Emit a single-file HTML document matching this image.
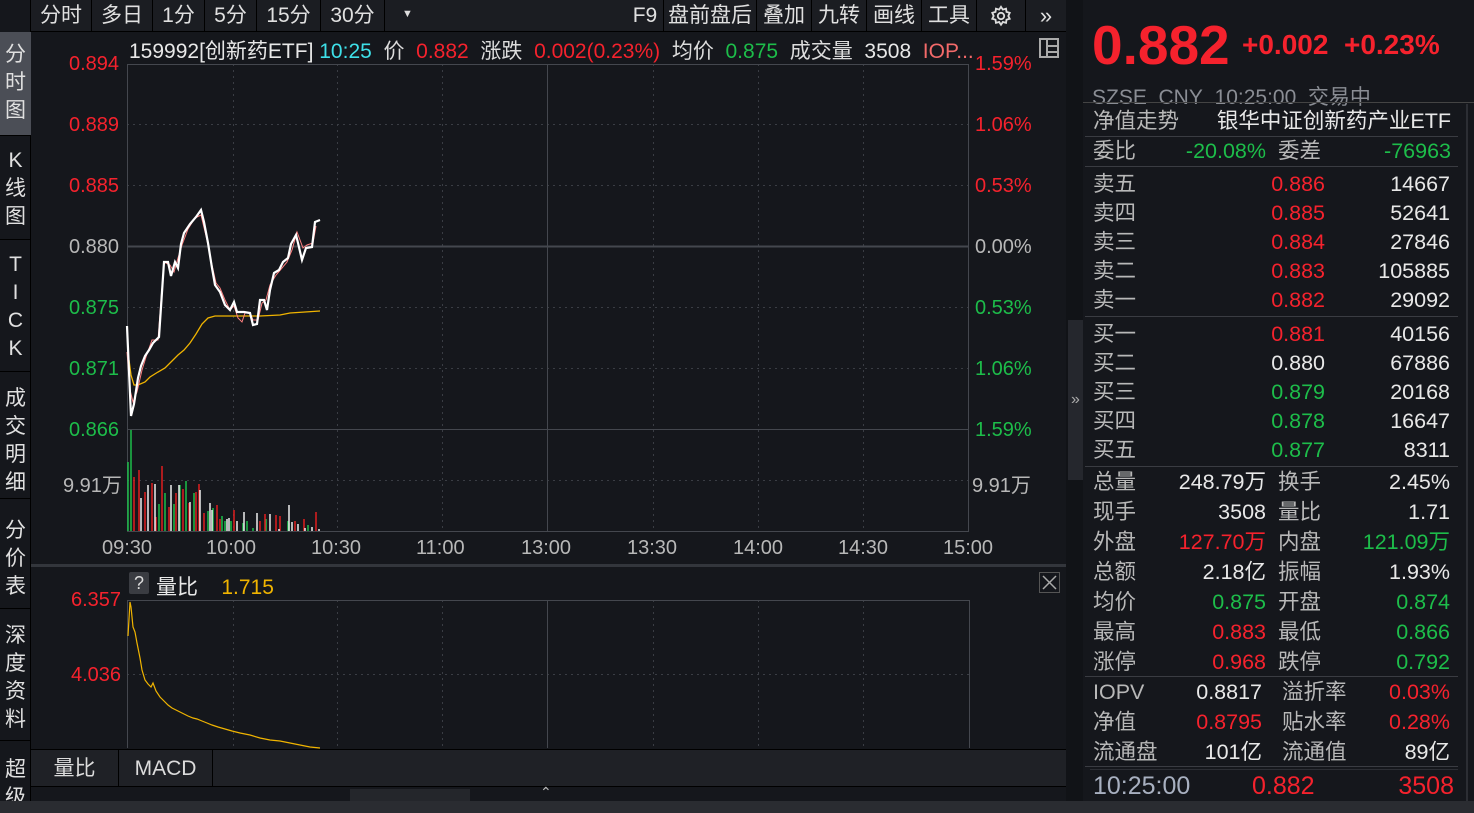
<!DOCTYPE html>
<html><head><meta charset="utf-8"><style>
*{margin:0;padding:0;box-sizing:border-box}
body{width:1474px;height:813px;background:#15171c;position:relative;overflow:hidden;font-family:"Liberation Sans","Noto Sans CJK SC",sans-serif;color:#dcdcdc}
.a{position:absolute;white-space:nowrap}
.r{color:#f5222d}.g{color:#1dbd4a}.w{color:#e8e8e8}.gr{color:#b8b8b8}.y{color:#f0b400}.c{color:#3ee0e8}
.tb{position:absolute;top:0;height:32px;font-size:21px;line-height:32px;text-align:center;border-right:1px solid #000;color:#e0e0e0}
.side{position:absolute;left:0;width:31px;font-size:21px;line-height:28px;text-align:center;color:#e0e0e0;border-bottom:1px solid #000}
.rl{position:absolute;font-size:21.5px;line-height:29px}
</style></head><body>
<div class="a" style="left:0;top:0;width:1066px;height:32px;background:#1b1d22;border-bottom:1px solid #000"></div>
<div class="tb" style="left:31px;width:61px">分时</div>
<div class="tb" style="left:92px;width:61px">多日</div>
<div class="tb" style="left:153px;width:52px">1分</div>
<div class="tb" style="left:205px;width:52px">5分</div>
<div class="tb" style="left:257px;width:64px">15分</div>
<div class="tb" style="left:321px;width:64px">30分</div>
<div class="a" style="left:402px;top:8px;font-size:11px;color:#ddd">▼</div>
<div class="tb" style="left:627px;width:37px">F9</div>
<div class="tb" style="left:664px;width:93px">盘前盘后</div>
<div class="tb" style="left:757px;width:55px">叠加</div>
<div class="tb" style="left:812px;width:55px">九转</div>
<div class="tb" style="left:867px;width:55px">画线</div>
<div class="tb" style="left:922px;width:55px">工具</div>
<div class="tb" style="left:977px;width:49px"><svg width="22" height="22" viewBox="0 0 24 24" style="margin-top:5px" fill="none" stroke="#ddd" stroke-width="2"><circle cx="12" cy="12" r="3.5"/><path d="M12 2l2 3 3.5-1 .5 3.5 3.5 1-1.5 3.5 1.5 3-3.5 1-.5 3.5-3.5-1-2 3-2-3-3.5 1-.5-3.5-3.5-1 1.5-3-1.5-3.5 3.5-1 .5-3.5 3.5 1z"/></svg></div>
<div class="tb" style="left:1026px;width:40px;border:none;font-size:22px">»</div>
<div class="a" style="left:0;top:0;width:31px;height:813px;background:#15171c;border-right:1px solid #000"></div>
<div class="side" style="top:32px;height:104px;background:#4b4e56;padding-top:9px">分<br>时<br>图</div>
<div class="side" style="top:136px;height:104px;padding-top:11px">K<br>线<br>图</div>
<div class="side" style="top:240px;height:132px;padding-top:11px">T<br>I<br>C<br>K</div>
<div class="side" style="top:372px;height:127px;padding-top:13px">成<br>交<br>明<br>细</div>
<div class="side" style="top:499px;height:110px;padding-top:18px">分<br>价<br>表</div>
<div class="side" style="top:609px;height:132px;padding-top:13px">深<br>度<br>资<br>料</div>
<div class="side" style="top:741px;height:72px;padding-top:15px;border:none">超<br>级</div>
<div class="a" style="left:129px;top:35px;font-size:21px"><span class="w">159992[创新药ETF]</span> <span class="c">10:25</span>&nbsp; 价&nbsp; <span class="r">0.882</span>&nbsp; 涨跌&nbsp; <span class="r">0.002(0.23%)</span>&nbsp; 均价&nbsp; <span class="g">0.875</span>&nbsp; 成交量&nbsp; <span class="w">3508</span>&nbsp; <span style="color:#f36a6a">IOP...</span></div>
<svg class="a" style="left:1038px;top:37px" width="22" height="22" viewBox="0 0 22 22" fill="none" stroke="#aaa" stroke-width="2"><rect x="2" y="2" width="18" height="18"/><path d="M9 2v18M9 9h11M9 15h11"/></svg>
<svg class="a" style="left:0;top:0" width="1066" height="813">
<g stroke="#3a3d44" stroke-width="1" stroke-dasharray="2,4">
<line x1="127" y1="124.5" x2="969" y2="124.5"/><line x1="127" y1="185.5" x2="969" y2="185.5"/><line x1="127" y1="307.5" x2="969" y2="307.5"/><line x1="127" y1="368.5" x2="969" y2="368.5"/><line x1="127" y1="480.5" x2="969" y2="480.5"/>
<line x1="233.5" y1="64" x2="233.5" y2="531"/><line x1="337.5" y1="64" x2="337.5" y2="531"/><line x1="442.5" y1="64" x2="442.5" y2="531"/><line x1="653.5" y1="64" x2="653.5" y2="531"/><line x1="758.5" y1="64" x2="758.5" y2="531"/><line x1="863.5" y1="64" x2="863.5" y2="531"/>
<line x1="127" y1="674.5" x2="969" y2="674.5"/>
<line x1="233.5" y1="600" x2="233.5" y2="748"/><line x1="337.5" y1="600" x2="337.5" y2="748"/><line x1="442.5" y1="600" x2="442.5" y2="748"/><line x1="653.5" y1="600" x2="653.5" y2="748"/><line x1="758.5" y1="600" x2="758.5" y2="748"/><line x1="863.5" y1="600" x2="863.5" y2="748"/>
</g>
<g stroke="#44474e" stroke-width="1" fill="none">
<rect x="127.5" y="64.5" width="841" height="467"/>
<line x1="127" y1="246.5" x2="969" y2="246.5" stroke-width="2"/>
<line x1="127" y1="429.5" x2="969" y2="429.5"/>
<line x1="547.5" y1="64" x2="547.5" y2="531"/>
<path d="M127.5 748V600.5H969.5V748"/>
<line x1="547.5" y1="600" x2="547.5" y2="748"/>
</g>
<line x1="31" y1="565.5" x2="1066" y2="565.5" stroke="#33363c" stroke-width="3"/>
<g stroke-width="1.5">
<path stroke="#1dbd4a" d="M128 531V462M131 531V430M159 531V504M165 531V493M174 531V504M180 531V485M186 531V481M194 531V493M208 531V511M213 531V508M222 531V516M225 531V521M231 531V521M243 531V523M247 531V521M253 531V528M266 531V519M288 531V521M289 531V523M308 531V525"/>
<path stroke="#e01f1f" d="M134 531V477M139 531V470M145 531V492M152 531V483M156 531V517M162 531V466M169 531V507M176 531V493M183 531V489M189 531V503M196 531V492M199 531V484M204 531V513M217 531V505M220 531V519M234 531V510M260 531V521M265 531V514M276 531V515M280 531V516M295 531V521M304 531V519M316 531V512"/>
<path stroke="#ededed" d="M141 531V498M148 531V485M155 531V484M171 531V485M179 531V485M190 531V502M200 531V490M210 531V503M212 531V510M227 531V519M229 531V518M237 531V521M244 531V512M257 531V513M270 531V514M279 531V529M289 531V505M292 531V522M298 531V524M305 531V528M312 531V527M319 531V529"/>
</g>
<polyline fill="none" stroke="#f0b400" stroke-width="1.3" points="129,360 131,375 134,385 138,385 145,382 150,377 158,372 165,368 172,361 178,355 184,350 190,343 196,334 202,324 208,318 215,316 230,316 245,316 260,316 280,315 290,313 305,312 320,311"/>
<polyline fill="none" stroke="#ff8080" stroke-width="1" points="127,352 130,390 133,402 137,392 142,370 146,357 152,340 158,340 161,300 164,262 170,265 174,272 178,258 182,245 188,229 195,218 201,215 207,240 212,265 216,283 220,288 225,300 230,310 234,306 238,318 242,322 245,313 250,313 253,320 258,320 262,303 266,300 270,285 276,275 282,268 287,262 292,250 297,232 300,240 303,248 307,245 313,243 316,226"/>
<polyline fill="none" stroke="#ffffff" stroke-width="2.2" points="127,326 131,416 134,404 138,378 141,366 145,356 149,350 153,343 156,340 159,337 162,292 164,262 168,262 171,276 175,262 178,268 181,244 184,233 190,224 196,217 201,210 204,222 208,243 212,268 215,285 220,292 225,305 230,310 234,302 237,312 244,312 250,313 253,325 257,324 260,300 264,300 267,310 270,290 274,273 279,270 283,262 288,258 291,244 296,235 298,243 302,260 306,248 312,247 315,222 320,220"/>
<polyline fill="none" stroke="#f0b400" stroke-width="1.2" points="128,636 130,602 131,607 133,627 135,632 137,643 140,658 142,670 145,680 148,684 151,687 153,683 156,691 160,697 164,701 168,705 172,708 176,710 180,712 184,714 188,716 193,718 197,719 202,721 207,723 212,725 218,727 225,729 232,731 240,733 250,735 260,738 270,740 280,741 290,743 300,745 310,747 320,748"/>
<rect x="1039.5" y="572.5" width="20" height="20" fill="none" stroke="#555"/>
<path d="M1043 576l13 13M1056 576l-13 13" stroke="#aaa" stroke-width="1.5"/>
</svg>
<div class="a r" style="left:69px;top:53px;font-size:20px">0.894</div>
<div class="a r" style="left:69px;top:114px;font-size:20px">0.889</div>
<div class="a r" style="left:69px;top:175px;font-size:20px">0.885</div>
<div class="a gr" style="left:69px;top:236px;font-size:20px">0.880</div>
<div class="a g" style="left:69px;top:297px;font-size:20px">0.875</div>
<div class="a g" style="left:69px;top:358px;font-size:20px">0.871</div>
<div class="a g" style="left:69px;top:419px;font-size:20px">0.866</div>
<div class="a gr" style="left:63px;top:469px;font-size:20px">9.91万</div>
<div class="a r" style="left:975px;top:53px;font-size:20px">1.59%</div>
<div class="a r" style="left:975px;top:114px;font-size:20px">1.06%</div>
<div class="a r" style="left:975px;top:175px;font-size:20px">0.53%</div>
<div class="a gr" style="left:975px;top:236px;font-size:20px">0.00%</div>
<div class="a g" style="left:975px;top:297px;font-size:20px">0.53%</div>
<div class="a g" style="left:975px;top:358px;font-size:20px">1.06%</div>
<div class="a g" style="left:975px;top:419px;font-size:20px">1.59%</div>
<div class="a gr" style="left:972px;top:469px;font-size:20px">9.91万</div>
<div class="a gr" style="left:102px;top:537px;font-size:20px">09:30</div>
<div class="a gr" style="left:206px;top:537px;font-size:20px">10:00</div>
<div class="a gr" style="left:311px;top:537px;font-size:20px">10:30</div>
<div class="a gr" style="left:416px;top:537px;font-size:20px">11:00</div>
<div class="a gr" style="left:521px;top:537px;font-size:20px">13:00</div>
<div class="a gr" style="left:627px;top:537px;font-size:20px">13:30</div>
<div class="a gr" style="left:733px;top:537px;font-size:20px">14:00</div>
<div class="a gr" style="left:838px;top:537px;font-size:20px">14:30</div>
<div class="a gr" style="left:943px;top:537px;font-size:20px">15:00</div>
<div class="a" style="left:129px;top:572px;width:20px;height:22px;background:#3a3c42;border-radius:2px;font-size:18px;text-align:center;line-height:22px">?</div>
<div class="a w" style="left:156px;top:571px;font-size:21px">量比&nbsp;&nbsp;&nbsp; <span class="y">1.715</span></div>
<div class="a r" style="left:71px;top:589px;font-size:20px">6.357</div>
<div class="a r" style="left:71px;top:664px;font-size:20px">4.036</div>
<div class="a" style="left:31px;top:749px;width:1035px;height:38px;background:#1f2126;border-top:1px solid #000;border-bottom:1px solid #000"></div>
<div class="a" style="left:31px;top:750px;width:88px;height:37px;border-right:1px solid #000;font-size:21px;line-height:37px;text-align:center">量比</div>
<div class="a" style="left:119px;top:750px;width:94px;height:37px;border-right:1px solid #000;font-size:21px;line-height:37px;text-align:center">MACD</div>
<div class="a" style="left:350px;top:789px;width:120px;height:12px;background:#24262b"></div>
<div class="a" style="left:540px;top:784px;font-size:14px;color:#bbb">⌃</div>
<div class="a" style="left:0;top:801px;width:1474px;height:12px;background:#2a2c31"></div>
<div class="a" style="left:1066px;top:0;width:17px;height:801px;background:#111317"></div>
<div class="a" style="left:1068px;top:320px;width:15px;height:160px;background:#25272d;color:#aaa;font-size:16px;line-height:160px;text-align:center">»</div>
<div class="a" style="left:1083px;top:0;width:391px;height:801px;background:#15171c"></div>
<div class="a r" style="left:1092px;top:14px;font-size:55px;font-weight:bold;line-height:62px">0.882</div>
<div class="a r" style="left:1242px;top:29px;font-size:28px;font-weight:bold">+0.002&nbsp; +0.23%</div>
<div class="a" style="left:1092px;top:81px;font-size:21px;color:#8a8d94">SZSE&nbsp; CNY&nbsp; 10:25:00&nbsp; 交易中</div>
<div class="a" style="left:1083px;top:102px;width:391px;height:1px;background:#444"></div>
<div class="a" style="left:1466px;top:104px;width:2px;height:697px;background:#2c2e34"></div>
<div class="rl gr" style="left:1093px;top:107px">净值走势</div>
<div class="rl w" style="right:23px;top:107px">银华中证创新药产业ETF</div>
<div class="a" style="left:1085px;top:136px;width:373px;height:1px;background:#3a3c42"></div>
<div class="rl gr" style="left:1093px;top:137px">委比</div>
<div class="rl g" style="right:208px;top:137px">-20.08%</div>
<div class="rl gr" style="left:1278px;top:137px">委差</div>
<div class="rl g" style="right:23px;top:137px">-76963</div>
<div class="a" style="left:1085px;top:166px;width:373px;height:1px;background:#3a3c42"></div>
<div class="a" style="left:1085px;top:170px;width:373px">
<div class="rl gr" style="left:8px;top:0">卖五</div><div class="rl r" style="right:133px;top:0">0.886</div><div class="rl w" style="right:8px;top:0">14667</div>
<div class="rl gr" style="left:8px;top:29px">卖四</div><div class="rl r" style="right:133px;top:29px">0.885</div><div class="rl w" style="right:8px;top:29px">52641</div>
<div class="rl gr" style="left:8px;top:58px">卖三</div><div class="rl r" style="right:133px;top:58px">0.884</div><div class="rl w" style="right:8px;top:58px">27846</div>
<div class="rl gr" style="left:8px;top:87px">卖二</div><div class="rl r" style="right:133px;top:87px">0.883</div><div class="rl w" style="right:8px;top:87px">105885</div>
<div class="rl gr" style="left:8px;top:116px">卖一</div><div class="rl r" style="right:133px;top:116px">0.882</div><div class="rl w" style="right:8px;top:116px">29092</div>
</div>
<div class="a" style="left:1085px;top:316px;width:373px;height:1px;background:#3a3c42"></div>
<div class="a" style="left:1085px;top:320px;width:373px">
<div class="rl gr" style="left:8px;top:0">买一</div><div class="rl r" style="right:133px;top:0">0.881</div><div class="rl w" style="right:8px;top:0">40156</div>
<div class="rl gr" style="left:8px;top:29px">买二</div><div class="rl w" style="right:133px;top:29px">0.880</div><div class="rl w" style="right:8px;top:29px">67886</div>
<div class="rl gr" style="left:8px;top:58px">买三</div><div class="rl g" style="right:133px;top:58px">0.879</div><div class="rl w" style="right:8px;top:58px">20168</div>
<div class="rl gr" style="left:8px;top:87px">买四</div><div class="rl g" style="right:133px;top:87px">0.878</div><div class="rl w" style="right:8px;top:87px">16647</div>
<div class="rl gr" style="left:8px;top:116px">买五</div><div class="rl g" style="right:133px;top:116px">0.877</div><div class="rl w" style="right:8px;top:116px">8311</div>
</div>
<div class="a" style="left:1085px;top:466px;width:373px;height:1px;background:#3a3c42"></div>
<div class="a" style="left:1085px;top:468px;width:373px">
<div class="rl gr" style="left:8px;top:0">总量</div><div class="rl w" style="right:192px;top:0">248.79万</div><div class="rl gr" style="left:193px;top:0">换手</div><div class="rl w" style="right:8px;top:0">2.45%</div>
<div class="rl gr" style="left:8px;top:30px">现手</div><div class="rl w" style="right:192px;top:30px">3508</div><div class="rl gr" style="left:193px;top:30px">量比</div><div class="rl w" style="right:8px;top:30px">1.71</div>
<div class="rl gr" style="left:8px;top:60px">外盘</div><div class="rl r" style="right:192px;top:60px">127.70万</div><div class="rl gr" style="left:193px;top:60px">内盘</div><div class="rl g" style="right:8px;top:60px">121.09万</div>
<div class="rl gr" style="left:8px;top:90px">总额</div><div class="rl w" style="right:192px;top:90px">2.18亿</div><div class="rl gr" style="left:193px;top:90px">振幅</div><div class="rl w" style="right:8px;top:90px">1.93%</div>
<div class="rl gr" style="left:8px;top:120px">均价</div><div class="rl g" style="right:192px;top:120px">0.875</div><div class="rl gr" style="left:193px;top:120px">开盘</div><div class="rl g" style="right:8px;top:120px">0.874</div>
<div class="rl gr" style="left:8px;top:150px">最高</div><div class="rl r" style="right:192px;top:150px">0.883</div><div class="rl gr" style="left:193px;top:150px">最低</div><div class="rl g" style="right:8px;top:150px">0.866</div>
<div class="rl gr" style="left:8px;top:180px">涨停</div><div class="rl r" style="right:192px;top:180px">0.968</div><div class="rl gr" style="left:193px;top:180px">跌停</div><div class="rl g" style="right:8px;top:180px">0.792</div>
</div>
<div class="a" style="left:1085px;top:676px;width:373px;height:1px;background:#3a3c42"></div>
<div class="a" style="left:1085px;top:678px;width:373px">
<div class="rl gr" style="left:8px;top:0">IOPV</div><div class="rl w" style="right:196px;top:0">0.8817</div><div class="rl gr" style="left:197px;top:0">溢折率</div><div class="rl r" style="right:8px;top:0">0.03%</div>
<div class="rl gr" style="left:8px;top:30px">净值</div><div class="rl r" style="right:196px;top:30px">0.8795</div><div class="rl gr" style="left:197px;top:30px">贴水率</div><div class="rl r" style="right:8px;top:30px">0.28%</div>
<div class="rl gr" style="left:8px;top:60px">流通盘</div><div class="rl w" style="right:196px;top:60px">101亿</div><div class="rl gr" style="left:197px;top:60px">流通值</div><div class="rl w" style="right:8px;top:60px">89亿</div>
</div>
<div class="a" style="left:1085px;top:766px;width:373px;height:1px;background:#3a3c42"></div>
<div class="a" style="left:1090px;top:769px;width:368px;height:1px;background:#2c2e34"></div>
<div class="a" style="left:1093px;top:772px;font-size:25px;color:#a8b0c0">10:25:00</div>
<div class="a r" style="left:1252px;top:772px;font-size:25px">0.882</div>
<div class="a r" style="right:20px;top:772px;font-size:25px">3508</div>
</body></html>
